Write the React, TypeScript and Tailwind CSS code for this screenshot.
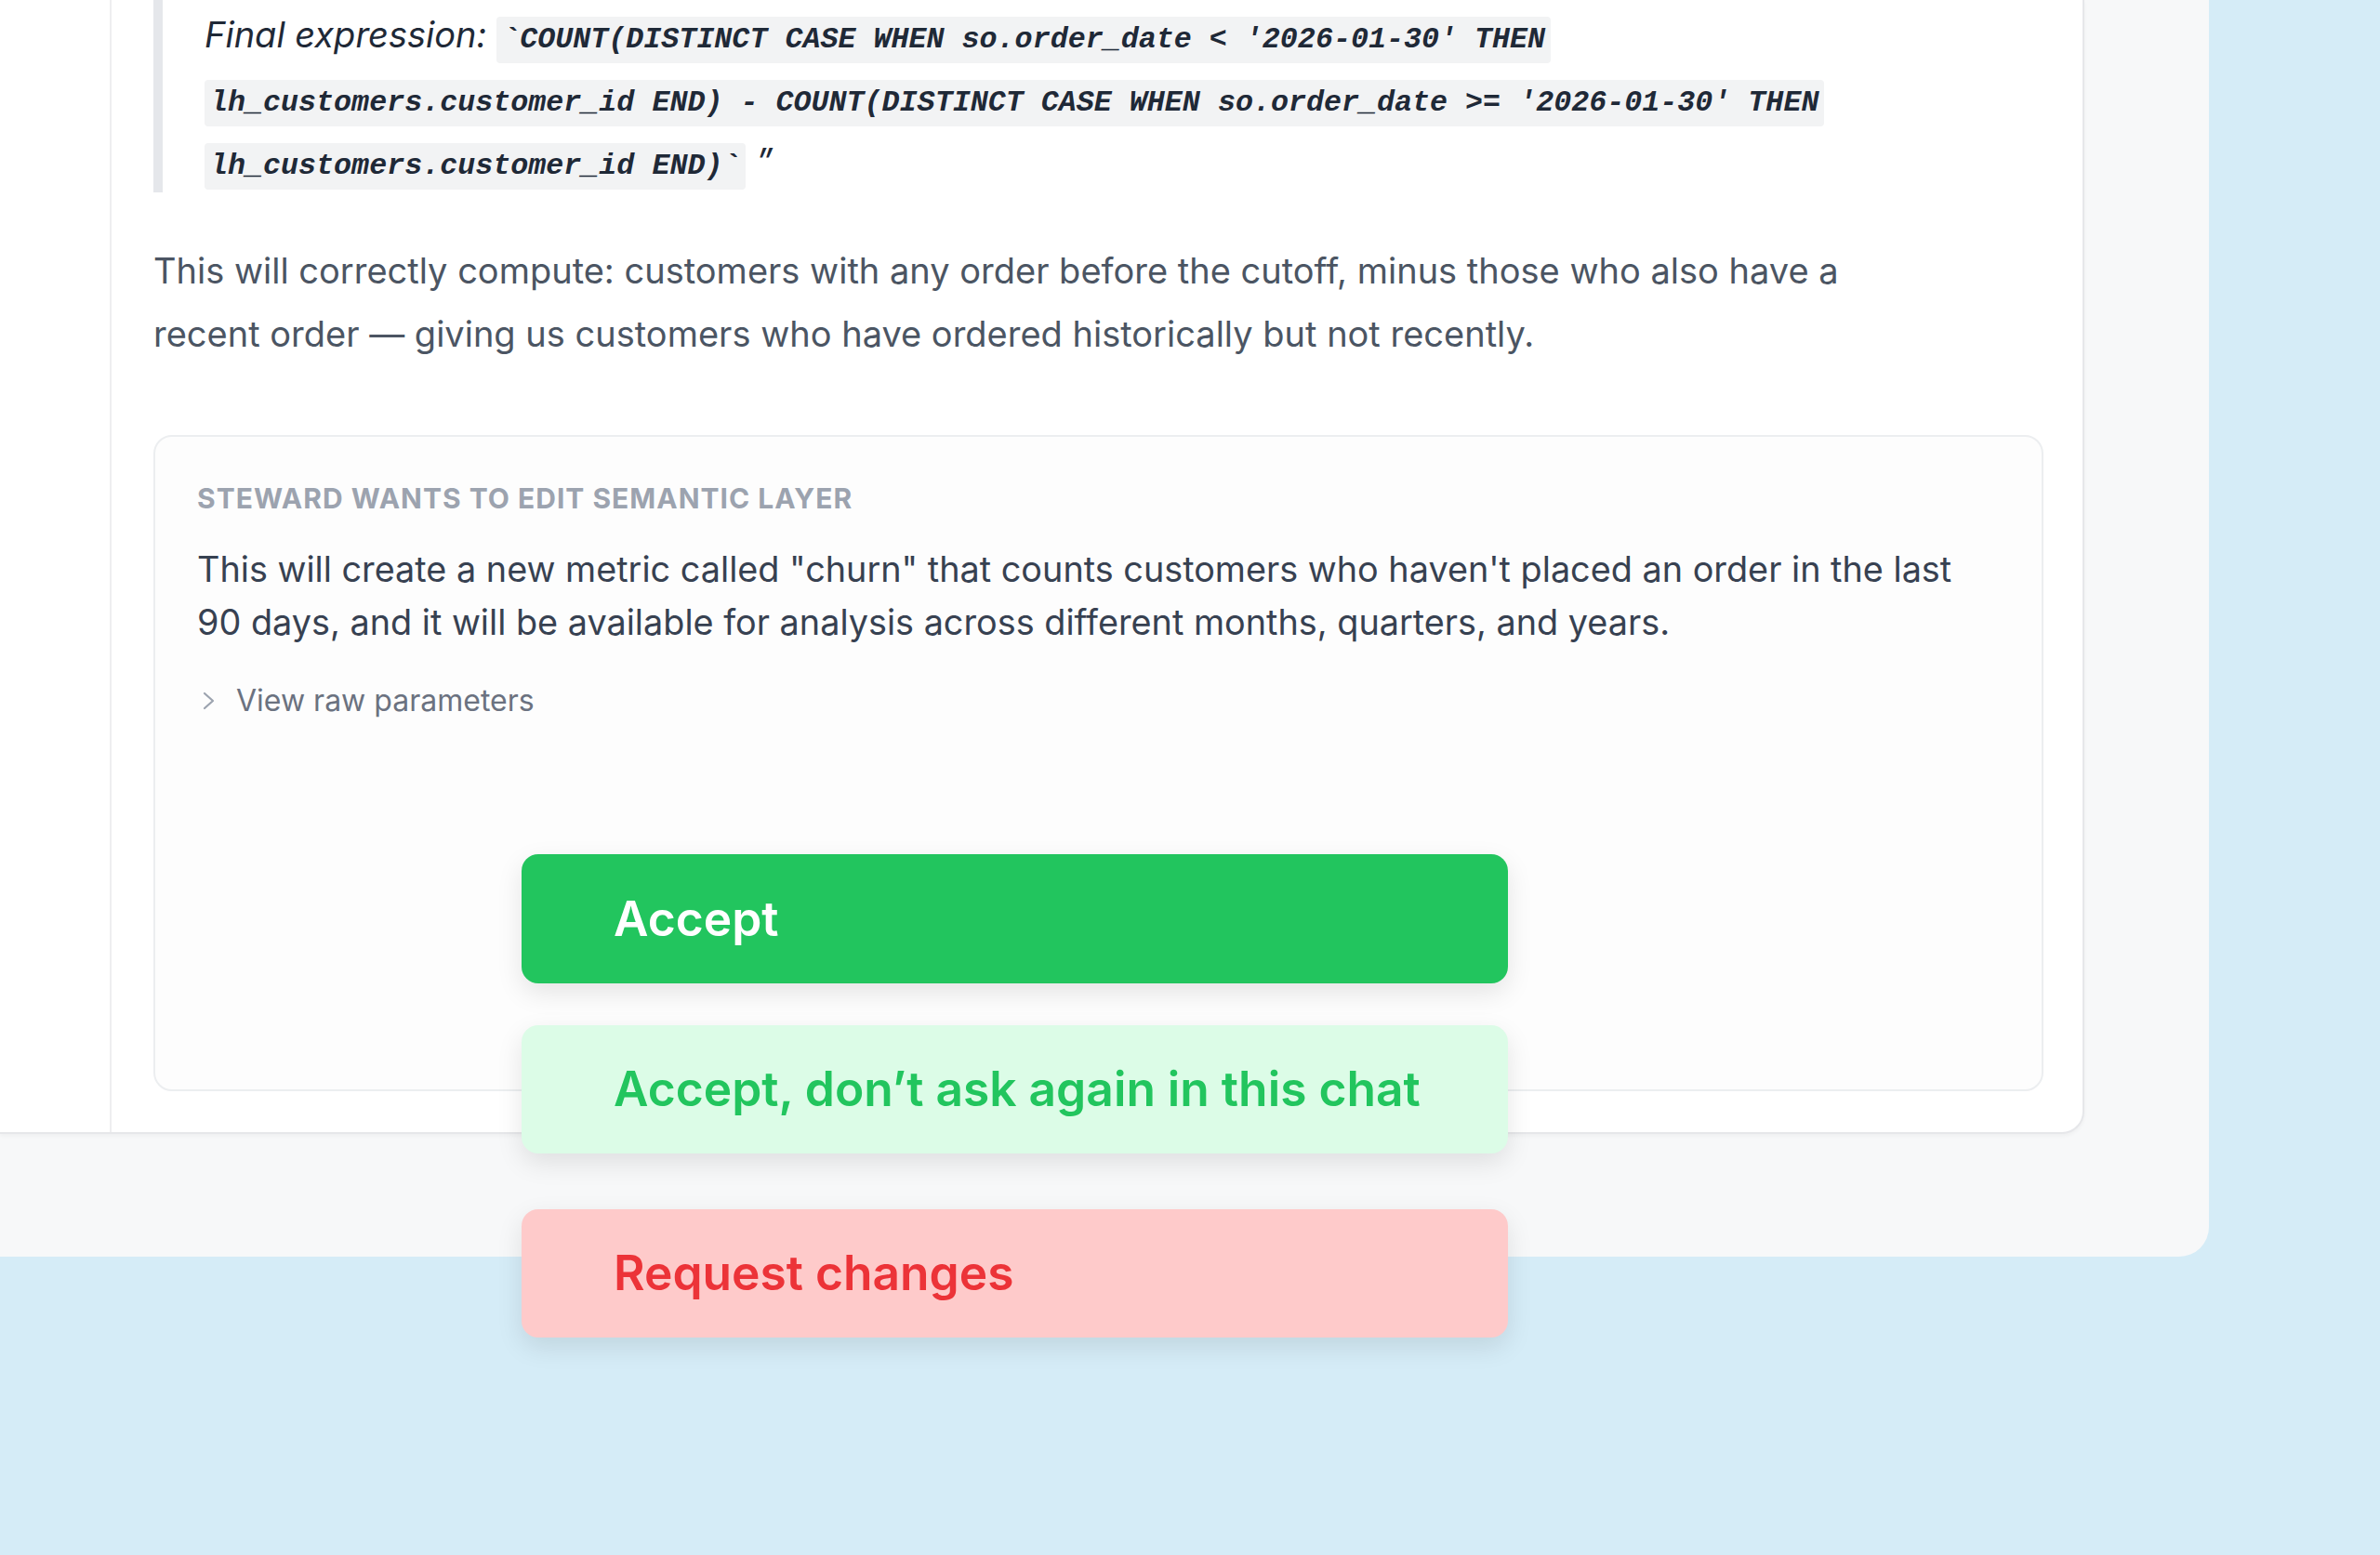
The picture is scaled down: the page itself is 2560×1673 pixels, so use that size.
import React from "react";

function Chevron() {
  return (
    <svg width="16" height="20" viewBox="0 0 16 20" fill="none" className="shrink-0">
      <polyline points="3,2 12,10 3,18" stroke="#9ca3af" strokeWidth="2.2" strokeLinecap="round" strokeLinejoin="round" />
    </svg>
  );
}

const codeCls =
  "font-['Liberation_Mono',monospace] font-bold italic text-[31.7px] leading-[36px] text-[#1f2937] bg-[#f2f3f4] px-[6px] py-[7px] rounded-[4px]";

export default function App() {
  return (
    <div className="relative w-full h-[1673px] overflow-hidden bg-[#d5ecf7] font-['Inter',sans-serif]">
      {/* outer panel */}
      <div className="w-[2376px] h-[1352px] bg-[#f7f8f9] rounded-br-[32px]">
        {/* inner panel */}
        <div className="flex w-[2242px] h-[1220px] bg-white border-r-2 border-b-2 border-[#e6e7ea] rounded-br-[24px] shadow-[0_2px_4px_rgba(0,0,0,0.04)] overflow-hidden">
          <div className="w-[118px] shrink-0" />
          <div className="flex-1 border-l-2 border-[#eeeef0] pl-[45px] pr-[42px]">
            {/* blockquote */}
            <div className="border-l-[10px] border-[#e5e7eb] pl-[45px] pt-[3px] italic text-[38px] leading-[68px] text-[#1f2937] whitespace-nowrap">
              <div className="h-[68px]">
                Final expression:{" "}
                <span className={codeCls}>`COUNT(DISTINCT CASE WHEN so.order_date &lt; '2026-01-30' THEN</span>
              </div>
              <div className="h-[68px]">
                <span className={codeCls}>lh_customers.customer_id END) - COUNT(DISTINCT CASE WHEN so.order_date &gt;= '2026-01-30' THEN</span>
              </div>
              <div className="h-[68px]">
                <span className={codeCls}>lh_customers.customer_id END)`</span> ”
              </div>
            </div>

            {/* paragraph */}
            <div className="mt-[50px] text-[38px] leading-[68px] text-[#4b5563] whitespace-nowrap">
              <div>This will correctly compute: customers with any order before the cutoff, minus those who also have a</div>
              <div>recent order — giving us customers who have ordered historically but not recently.</div>
            </div>

            {/* card */}
            <div className="mt-[75px] h-[706px] border-2 border-[#eceef0] rounded-[20px] bg-[#fdfdfd] px-[45px] pt-[46px]">
              <div className="text-[30px] leading-[40px] font-bold uppercase text-[#9ca3af] tracking-[1px]">
                Steward wants to edit semantic layer
              </div>
              <div className="mt-[28px] text-[37.8px] leading-[57px] text-[#374151] whitespace-nowrap">
                <div>This will create a new metric called "churn" that counts customers who haven't placed an order in the last</div>
                <div>90 days, and it will be available for analysis across different months, quarters, and years.</div>
              </div>
              <div className="mt-[34px] flex items-center gap-[21px] pl-[5px] text-[32px] leading-[44px] text-[#6b7280]">
                <Chevron />
                <span>View raw parameters</span>
              </div>
            </div>
          </div>
        </div>
      </div>

      {/* action menu overlay */}
      <div className="absolute left-[561px] top-[919px] w-[1061px] h-[139px] rounded-[18px] bg-[#22c55e] flex items-center pl-[99px] text-[51.5px] font-semibold text-white shadow-[0_10px_28px_rgba(0,0,0,0.10)]">
        Accept
      </div>
      <div className="absolute left-[561px] top-[1103px] w-[1061px] h-[138px] rounded-[18px] bg-[#dcfce7] flex items-center pl-[99px] text-[51.5px] font-semibold text-[#22c55e] shadow-[0_10px_28px_rgba(0,0,0,0.10)]">
        Accept, don’t ask again in this chat
      </div>
      <div className="absolute left-[561px] top-[1301px] w-[1061px] h-[138px] rounded-[18px] bg-[#fecaca] flex items-center pl-[99px] text-[51.5px] font-semibold text-[#ec3338] shadow-[0_10px_28px_rgba(0,0,0,0.10)]">
        Request changes
      </div>
    </div>
  );
}
